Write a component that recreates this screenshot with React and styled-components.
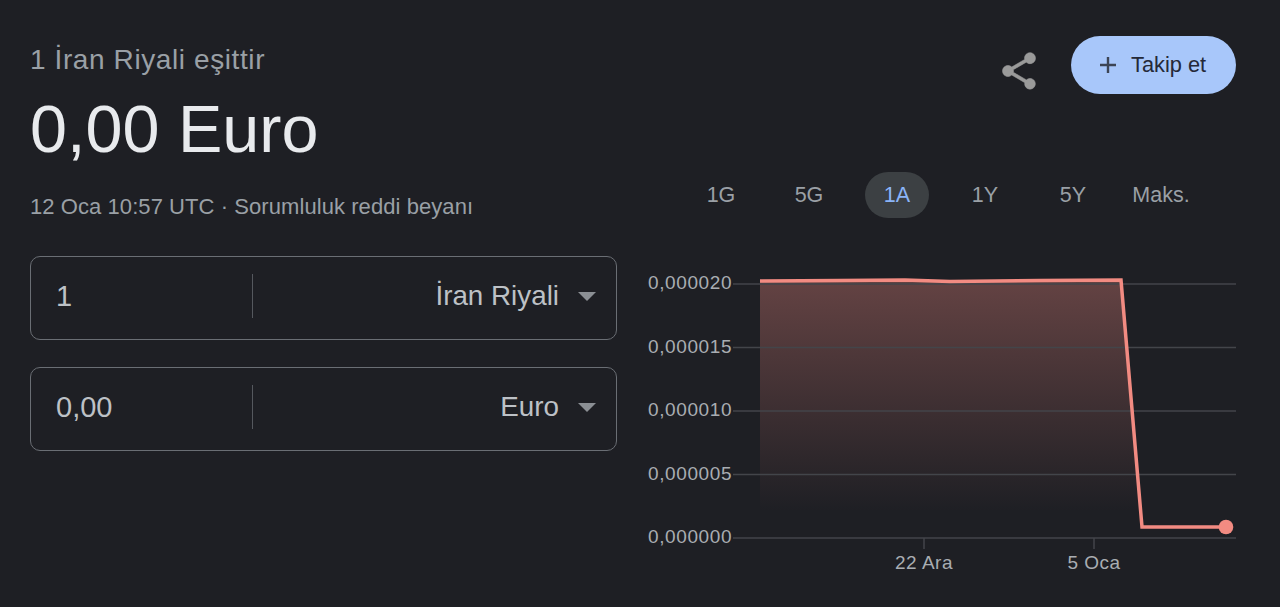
import React from "react";
import styled, { createGlobalStyle } from "styled-components";

const GlobalStyle = createGlobalStyle`
  html, body {
    margin: 0;
    height: 100%;
    background: #1e1f24;
  }
`;

const Page = styled.div`
  display: flex;
  gap: 23px;
  height: 607px;
  box-sizing: border-box;
  padding: 0 44px 0 30px;
  background: #1e1f24;
  font-family: "Liberation Sans", Arial, sans-serif;
  overflow: hidden;
`;

const Summary = styled.div`
  width: 587px;
  flex-shrink: 0;
`;

const Title = styled.div`
  margin-top: 44px;
  font-size: 28px;
  line-height: 32px;
  letter-spacing: 0.6px;
  color: #9aa0a6;
`;

const Amount = styled.div`
  margin-top: 15px;
  font-size: 66.5px;
  line-height: 76px;
  color: #e8eaed;
`;

const Stamp = styled.div`
  margin-top: 26px;
  font-size: 22px;
  line-height: 28px;
  letter-spacing: 0.07px;
  color: #9aa0a6;
`;

const Converters = styled.div`
  display: flex;
  flex-direction: column;
  gap: 27px;
  margin-top: 35px;
`;

const Converter = styled.div`
  display: flex;
  align-items: center;
  height: 84px;
  box-sizing: border-box;
  padding-bottom: 4px;
  border: 1.5px solid #6a6e74;
  border-radius: 10px;
`;

const Value = styled.div`
  width: 222px;
  height: 44px;
  box-sizing: border-box;
  padding-left: 25px;
  font-size: 29px;
  line-height: 44px;
  color: #bdc1c6;
  border-right: 1.5px solid #55585e;
`;

const Currency = styled.div`
  flex: 1;
  display: flex;
  align-items: center;
  justify-content: flex-end;
  gap: 19px;
  padding-right: 20px;
  font-size: 27.8px;
  color: #bdc1c6;
`;

const Caret = styled.span`
  width: 0;
  height: 0;
  border-left: 9px solid transparent;
  border-right: 9px solid transparent;
  border-top: 9px solid #8b8f94;
`;

const Trend = styled.div`
  flex: 1;
  display: flex;
  flex-direction: column;
  min-width: 0;
`;

const Actions = styled.div`
  display: flex;
  align-items: flex-start;
  justify-content: flex-end;
  gap: 30px;
  margin-top: 36px;
`;

const ShareGlyph = styled.svg`
  display: block;
  margin-top: 13px;
`;

const FollowButton = styled.button`
  display: flex;
  align-items: center;
  gap: 14px;
  width: 165px;
  height: 58px;
  box-sizing: border-box;
  padding: 0 0 0 28px;
  border: 0;
  border-radius: 29px;
  background: #a8c7fa;
  color: #242938;
  font-family: inherit;
  font-size: 21.8px;
`;

const Ranges = styled.div`
  display: flex;
  align-items: center;
  gap: 24px;
  margin: 78px 0 0 49px;
`;

const Range = styled.div`
  width: 64px;
  height: 46px;
  line-height: 46px;
  text-align: center;
  border-radius: 23px;
  font-size: 21.5px;
  color: ${(p) => (p.$active ? "#8ab4f8" : "#9aa0a6")};
  background: ${(p) => (p.$active ? "#3c4043" : "transparent")};
`;

const Chart = styled.svg`
  display: block;
  margin-top: 44px;
`;

const RANGES = ["1G", "5G", "1A", "1Y", "5Y", "Maks."];
const GRID = [
  { y: 22, label: "0,000020" },
  { y: 85.5, label: "0,000015" },
  { y: 149, label: "0,000010" },
  { y: 212.5, label: "0,000005" },
  { y: 276, label: "0,000000" },
];
const TICKS = [
  { x: 284, label: "22 Ara" },
  { x: 454, label: "5 Oca" },
];
// chart svg starts at x=640, y=262
const LINE = "M120 19 L200 18.5 L265 18 L310 19.5 L400 18.5 L481 18 L502 265 L586 265";

const ShareIcon = () => (
  <ShareGlyph width="44" height="44" viewBox="0 0 24 24" fill="#9a9a9a" stroke="#9a9a9a" strokeWidth="0.3">
    <path d="M18 16.08c-.76 0-1.44.3-1.96.77L8.91 12.7c.05-.23.09-.46.09-.7s-.04-.47-.09-.7l7.05-4.11c.54.5 1.25.81 2.04.81 1.66 0 3-1.34 3-3s-1.34-3-3-3-3 1.34-3 3c0 .24.04.47.09.7L8.04 9.81C7.5 9.31 6.79 9 6 9c-1.66 0-3 1.34-3 3s1.34 3 3 3c.79 0 1.5-.31 2.04-.81l7.12 4.16c-.05.21-.08.43-.08.65 0 1.61 1.31 2.92 2.92 2.92s2.92-1.31 2.92-2.92-1.31-2.92-2.92-2.92z" />
  </ShareGlyph>
);

const PlusIcon = () => (
  <svg width="18" height="18" viewBox="0 0 18 18" stroke="#3c4454" strokeWidth="2.4">
    <path d="M9 1v16M1 9h16" />
  </svg>
);

const PriceChart = () => (
  <Chart width="600" height="318" viewBox="0 0 600 318">
    <defs>
      <linearGradient id="fade" x1="0" y1="0" x2="0" y2="1">
        <stop offset="0" stopColor="#f28b82" stopOpacity="0.33" />
        <stop offset="1" stopColor="#f28b82" stopOpacity="0" />
      </linearGradient>
    </defs>
    <path d="M120 19 L481 18 L502 250 L120 250 Z" fill="url(#fade)" />
    {GRID.map((g) => (
      <g key={g.y}>
        <line x1="93" x2="596" y1={g.y} y2={g.y} stroke="#43454a" strokeWidth="1.5" />
        <text
          x="8"
          y={g.y + 5}
          fill="#a9adb2"
          fontSize="19"
          letterSpacing="0.6"
          fontFamily="'Liberation Sans', Arial, sans-serif"
        >
          {g.label}
        </text>
      </g>
    ))}
    {TICKS.map((t) => (
      <g key={t.x}>
        <line x1={t.x} x2={t.x} y1="276" y2="287" stroke="#43454a" strokeWidth="1.5" />
        <text
          x={t.x}
          y="307"
          fill="#a9adb2"
          fontSize="19"
          letterSpacing="0.5"
          textAnchor="middle"
          fontFamily="'Liberation Sans', Arial, sans-serif"
        >
          {t.label}
        </text>
      </g>
    ))}
    <path d={LINE} fill="none" stroke="#f28b82" strokeWidth="3.5" />
    <circle cx="586" cy="265" r="7.3" fill="#f28b82" />
  </Chart>
);

const App = () => {
  return (
    <>
      <GlobalStyle />
      <Page>
        <Summary>
          <Title>1 İran Riyali eşittir</Title>
          <Amount>0,00 Euro</Amount>
          <Stamp>12 Oca 10:57 UTC · Sorumluluk reddi beyanı</Stamp>
          <Converters>
            <Converter>
              <Value>1</Value>
              <Currency>
                İran Riyali
                <Caret />
              </Currency>
            </Converter>
            <Converter>
              <Value>0,00</Value>
              <Currency>
                Euro
                <Caret />
              </Currency>
            </Converter>
          </Converters>
        </Summary>
        <Trend>
          <Actions>
            <ShareIcon />
            <FollowButton>
              <PlusIcon />
              Takip et
            </FollowButton>
          </Actions>
          <Ranges>
            {RANGES.map((r) => (
              <Range key={r} $active={r === "1A"}>
                {r}
              </Range>
            ))}
          </Ranges>
          <PriceChart />
        </Trend>
      </Page>
    </>
  );
};

export default App;
